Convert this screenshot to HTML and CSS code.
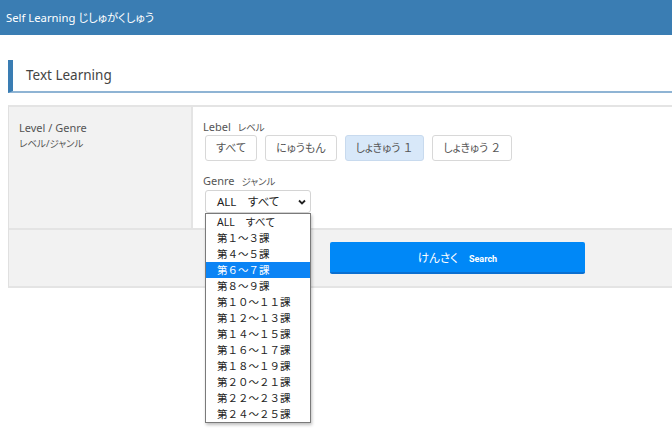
FILE: index.html
```html
<!DOCTYPE html>
<html lang="ja">
<head>
<meta charset="utf-8">
<title>Self Learning</title>
<link rel="stylesheet" href="styles.css">
</head>
<body>
<header class="topbar">Self Learning じしゅがくしゅう</header>
<main class="main">
  <h1 class="title">Text Learning</h1>
  <div class="form">
    <div class="row">
      <div class="label-cell">
        <div class="label-en">Level / Genre</div>
        <div class="label-ja">レベル/ジャンル</div>
      </div>
      <div class="field-cell">
        <div class="field-label">Lebel<span class="sub">レベル</span></div>
        <div class="btns">
          <button class="chip">すべて</button>
          <button class="chip">にゅうもん</button>
          <button class="chip active">しょきゅう<span class="fw">１</span></button>
          <button class="chip">しょきゅう<span class="fw">２</span></button>
        </div>
        <div class="field-label genre">Genre<span class="sub">ジャンル</span></div>
        <div class="select-wrap">
          <div class="select">ALL　すべて
            <svg class="chev" width="8" height="6" viewBox="0 0 8 6"><path d="M1 1.5 L4 4.5 L7 1.5" fill="none" stroke="#222" stroke-width="1.8"/></svg>
          </div>
          <ul class="dropdown">
            <li>ALL　すべて</li>
            <li>第１～３課</li>
            <li>第４～５課</li>
            <li class="hl">第６～７課</li>
            <li>第８～９課</li>
            <li>第１０～１１課</li>
            <li>第１２～１３課</li>
            <li>第１４～１５課</li>
            <li>第１６～１７課</li>
            <li>第１８～１９課</li>
            <li>第２０～２１課</li>
            <li>第２２～２３課</li>
            <li>第２４～２５課</li>
          </ul>
        </div>
      </div>
    </div>
    <div class="row search-row">
      <button class="search">けんさく<span class="search-en">Search</span></button>
    </div>
  </div>
</main>
</body>
</html>
```
FILE: styles.css
```css
* { box-sizing: border-box; }
html, body {
  min-height: 100%;
  height: 100%;
}
body {
  margin: 0;
  font-family: "Noto Sans", "Noto Sans CJK JP", sans-serif;
  font-feature-settings: "palt";
  color: #444;
  background: #fff;
}
.topbar {
  height: 35px;
  background: #3a7db3;
  color: #fff;
  font-size: 11.3px;
  line-height: 35px;
  padding-left: 6px;
}
.main {
  padding: 25px 0 0 8px;
}
.title {
  margin: 0;
  height: 33px;
  border-left: 5px solid #3a7db3;
  border-bottom: 2px solid #8fb4d4;
  font-size: 13.5px;
  font-weight: normal;
  color: #444;
  padding-left: 13px;
  line-height: 31px;
}
.form {
  margin-top: 12px;
  border-top: 2px solid #e4e4e4;
  border-left: 1px solid #e0e0e0;
  border-bottom: 2px solid #e4e4e4;
}
.row {
  display: flex;
}
.label-cell {
  width: 184px;
  flex: none;
  background: #f2f2f2;
  border-right: 2px solid #e4e4e4;
  padding: 12px 10px;
}
.label-en {
  font-size: 11px;
  color: #555;
  line-height: 17px;
}
.label-ja {
  font-size: 9.5px;
  color: #555;
  line-height: 14px;
  margin-top: 1px;
}
.field-cell {
  flex: 1;
  padding: 12px 10px 15px 10px;
}
.field-label {
  font-size: 11px;
  color: #555;
  line-height: 16px;
}
.field-label .sub {
  font-size: 9.5px;
  margin-left: 7px;
}
.btns {
  display: flex;
  gap: 8px;
  margin-top: -1px;
  padding-left: 2px;
}
.chip {
  height: 26px;
  padding: 0 10px;
  background: #fff;
  border: 1px solid #d8d8d8;
  border-radius: 3px;
  font-family: inherit;
  font-feature-settings: "palt";
  font-size: 11px;
  color: #555;
  line-height: 24px;
}
.chip .fw {
  font-feature-settings: normal;
  margin-left: 2px;
}
.chip.active {
  background: #d8e8f9;
  border-color: #c8daee;
}
.genre {
  margin-top: 12px;
}
.select-wrap {
  position: relative;
  padding-left: 2px;
  margin-top: 0;
}
.select {
  width: 106px;
  height: 23px;
  border: 1px solid #d4d4d4;
  border-radius: 3px;
  font-size: 11.5px;
  color: #222;
  line-height: 21px;
  padding-left: 11px;
  position: relative;
}
.chev {
  position: absolute;
  right: 4px;
  top: 8px;
}
.dropdown {
  position: absolute;
  left: 2px;
  top: 23px;
  width: 106px;
  margin: 0;
  padding: 0;
  list-style: none;
  background: #fff;
  border: 1px solid #7a7a7a;
  box-shadow: 1px 2px 3px rgba(0,0,0,0.25);
  z-index: 10;
}
.dropdown li {
  height: 16px;
  line-height: 16px;
  font-size: 10.5px;
  font-feature-settings: normal;
  color: #222;
  padding-left: 11px;
  white-space: nowrap;
}
.dropdown li.hl {
  background: #0b84f5;
  color: #fff;
}
.search-row {
  background: #f2f2f2;
  border-top: 2px solid #e4e4e4;
  padding: 12px 0 12px 321px;
}
.search {
  width: 255px;
  height: 32px;
  background: #0088f7;
  border: none;
  border-bottom: 2px solid #0a6fd0;
  border-radius: 2px;
  color: #fff;
  font-family: inherit;
  font-feature-settings: "palt";
  font-size: 11.5px;
}
.search-en {
  font-family: Roboto, "Noto Sans", sans-serif;
  font-weight: bold;
  font-size: 9px;
  margin-left: 11px;
}
```
